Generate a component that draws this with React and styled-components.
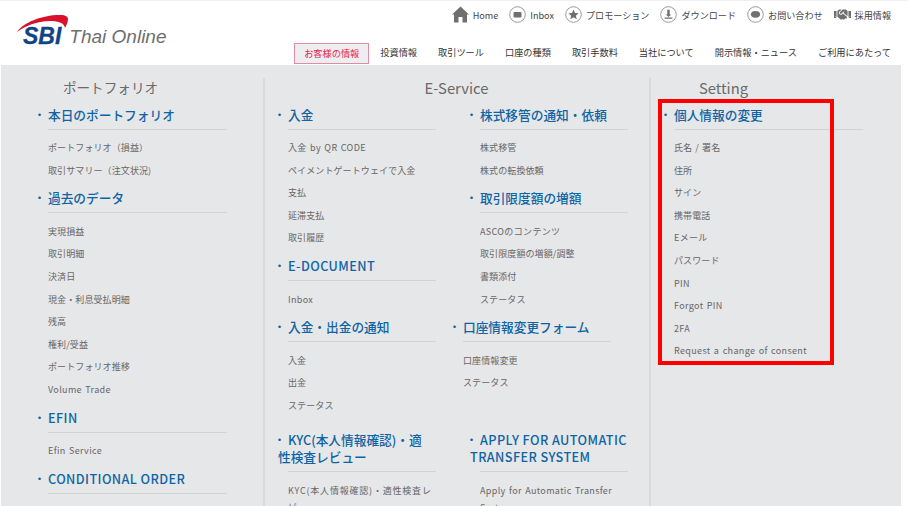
import React from "react";
import styled, { createGlobalStyle } from "styled-components";
import { FaHandshake } from "react-icons/fa";

const GlobalStyle = createGlobalStyle`
  html, body {
    margin: 0;
    padding: 0;
    background: #fff;
    overflow: hidden;
  }
  body {
    font-family: "Noto Sans CJK JP", "Noto Sans", sans-serif;
  }
`;

const Page = styled.div`
  position: relative;
  width: 908px;
  height: 506px;
  overflow: hidden;
`;

const Header = styled.header`
  height: 65px;
  box-sizing: border-box;
  border-top: 1px solid #eef0f4;
  display: flex;
  justify-content: space-between;
  padding: 0 17px 0 17px;
`;

const Logo = styled.div`
  display: flex;
  align-items: flex-end;
  height: 46px;
  position: relative;
  padding-left: 6px;
`;

const Swoosh = styled.svg`
  position: absolute;
  left: 0;
  top: 13px;
`;

const LogoMark = styled.span`
  font-family: "Liberation Sans", sans-serif;
  font-weight: 700;
  font-style: italic;
  font-size: 23px;
  line-height: 22px;
  color: #0f4486;
  -webkit-text-stroke: 0.3px #0f4486;
`;

const LogoName = styled.span`
  font-family: "Liberation Sans", sans-serif;
  font-style: italic;
  font-size: 19px;
  line-height: 21px;
  color: #6e6e6e;
  margin-left: 8px;
`;

const HeaderRight = styled.div`
  display: flex;
  flex-direction: column;
  align-items: flex-end;
`;

const TopLinks = styled.div`
  display: flex;
  align-items: center;
  gap: 11px;
  height: 42px;
  padding-bottom: 15px;
  box-sizing: border-box;
`;

const TopLink = styled.a`
  display: flex;
  align-items: center;
  gap: 4px;
  font-size: 9.1px;
  color: #444;
  white-space: nowrap;
`;

const Nav = styled.nav`
  display: flex;
  align-items: stretch;
  height: 21px;
`;

const NavItem = styled.a`
  display: flex;
  align-items: center;
  box-sizing: border-box;
  font-size: 9.2px;
  color: #333;
  white-space: nowrap;
  padding: ${(p) => (p.$active ? "0 9px 2px" : "0 0 4px 21px")};
  ${(p) =>
    p.$active &&
    `
    background: #eeeef0;
    border: 1px solid #e48ba3;
    color: #e8204f;
    margin-right: -10px;
  `}
`;

const Panel = styled.main`
  display: grid;
  grid-template-columns: 262px 386px 252px;
  height: 441px;
  width: 900px;
  margin-left: 1px;
  background: #e6e7e9;
  padding-top: 13px;
  box-sizing: border-box;
`;

const Column = styled.section`
  border-left: ${(p) => (p.$divider ? "2px solid #d9dadc" : "none")};
  padding-left: ${(p) => p.$pad}px;
  min-width: 0;
`;

const ColumnTitle = styled.h2`
  margin: 0 0 8.5px;
  font-size: ${(p) => p.$size || 14.8}px;
  line-height: 19px;
  font-weight: 400;
  color: #6a6a6a;
  text-align: center;
  padding-right: ${(p) => p.$shift || 0}px;
`;

const SubGrid = styled.div`
  display: grid;
  grid-template-columns: 148px 149px;
  column-gap: 44px;
  align-items: start;
`;

const Stack = styled.div`
  margin-left: ${(p) => p.$nudge || 0}px;
`;

const Group = styled.div`
  width: ${(p) => p.$width || 148}px;
  margin-bottom: ${(p) => p.$after ?? 7.1}px;
`;

const GroupTitle = styled.h3`
  position: relative;
  margin: 0;
  font-size: 12.7px;
  line-height: 17px;
  font-weight: 500;
  letter-spacing: ${(p) => (p.$latin ? "0.4px" : "0")};
  color: #0f64a3;
  padding-bottom: 6px;
  margin-left: ${(p) => (p.$hang ? "-10px" : "0")};
  margin-right: ${(p) => (p.$hang ? "-2px" : "0")};
  text-indent: ${(p) => (p.$hang ? "10px" : "0")};
  white-space: ${(p) => (p.$hang ? "pre-line" : "normal")};
  &::before {
    content: "・";
    position: absolute;
    left: ${(p) => (p.$hang ? "-4px" : "-14px")};
    top: 0;
    text-indent: 0;
    font-size: 11px;
    letter-spacing: 0;
  }
`;

const Rule = styled.div`
  height: 1px;
  background: #d2d3d5;
  margin-bottom: 7.5px;
`;

const Item = styled.a`
  display: block;
  font-size: 9px;
  line-height: 22.6px;
  color: #666;
  word-spacing: 1px;
  white-space: pre-line;
  letter-spacing: ${(p) => p.$track ?? (p.$latin ? 0.35 : 0.1)}px;
`;

const WrappedItem = styled(Item)`
  line-height: 17px;
  padding-top: 3px;
`;

const Highlight = styled.div`
  position: absolute;
  left: 658px;
  top: 99px;
  width: 176px;
  height: 266px;
  box-sizing: border-box;
  border: 4px solid #fe0000;
`;

const ICON = "#6f6f6f";

const hasLatin = (text) => /[A-Za-z]/.test(text);

const HomeIcon = () => (
  <svg width="17" height="17" viewBox="0 0 17 17">
    <path d="M8.5 0.5 L17 8.5 L15 8.5 L15 16.5 L10.5 16.5 L10.5 11 L6.5 11 L6.5 16.5 L2 16.5 L2 8.5 L0 8.5 Z" fill={ICON} />
  </svg>
);

const Ring = ({ children }) => (
  <svg width="17" height="17" viewBox="0 0 17 17">
    <circle cx="8.5" cy="8.5" r="7.8" fill="#fff" stroke="#9a9a9a" strokeWidth="1" />
    {children}
  </svg>
);

const InboxIcon = () => (
  <Ring>
    <rect x="4.5" y="6" width="8" height="5.5" rx="1" fill={ICON} />
  </Ring>
);

const StarIcon = () => (
  <Ring>
    <path d="M8.5 3.6 L10 7 L13.6 7.3 L10.9 9.7 L11.7 13.2 L8.5 11.3 L5.3 13.2 L6.1 9.7 L3.4 7.3 L7 7 Z" fill={ICON} />
  </Ring>
);

const DownloadIcon = () => (
  <Ring>
    <path d="M7.3 3.8 H9.7 V8.6 H11.2 L8.5 11 L5.8 8.6 H7.3 Z M4.6 11.6 H12.4 V12.8 H4.6 Z" fill={ICON} />
  </Ring>
);

const ChatIcon = () => (
  <Ring>
    <ellipse cx="8.5" cy="8.3" rx="4.6" ry="3.4" fill={ICON} />
  </Ring>
);

const columnOne = [
  { title: "本日のポートフォリオ", items: ["ポートフォリオ（損益）", "取引サマリー（注文状況)"] },
  {
    title: "過去のデータ",
    items: ["実現損益", "取引明細", "決済日", "現金・利息受払明細", "残高", "権利/受益", "ポートフォリオ推移", "Volume Trade"],
  },
  { title: "EFIN", items: ["Efin Service"] },
  { title: "CONDITIONAL ORDER", items: [] },
];

const topLinks = [
  { icon: <HomeIcon />, label: "Home" },
  { icon: <InboxIcon />, label: "Inbox" },
  { icon: <StarIcon />, label: "プロモーション" },
  { icon: <DownloadIcon />, label: "ダウンロード" },
  { icon: <ChatIcon />, label: "お問い合わせ" },
  { icon: <FaHandshake size={17} color={ICON} />, label: "採用情報" },
];

const navItems = ["投資情報", "取引ツール", "口座の種類", "取引手数料", "当社について", "開示情報・ニュース", "ご利用にあたって"];

const settingItems = ["氏名 / 署名", "住所", "サイン", "携帯電話", "Eメール", "パスワード", "PIN", "Forgot PIN", "2FA", "Request a change of consent"];

const MenuGroup = ({ title, items, width, after, hang, children }) => (
  <Group $width={width} $after={after}>
    <GroupTitle $hang={hang} $latin={/^[\x00-\x7f]+$/.test(title)}>
      {title}
    </GroupTitle>
    <Rule />
    {items &&
      items.map((item) => (
        <Item key={item} $latin={hasLatin(item)}>
          {item}
        </Item>
      ))}
    {children}
  </Group>
);

export default function App() {
  return (
    <Page>
      <GlobalStyle />
      <Header>
        <Logo>
          <Swoosh width="52" height="18" viewBox="0 0 52 18">
            <path d="M0 18 C6 9 24 1 43 1 C49 1 51 3 51 5 C51 8 49 12 48 14 C47 9 42 7 33 7 C20 7 8 12 0 18 Z" fill="#d8112c" />
          </Swoosh>
          <LogoMark>SBI</LogoMark>
          <LogoName>Thai Online</LogoName>
        </Logo>
        <HeaderRight>
          <TopLinks>
            {topLinks.map((link) => (
              <TopLink key={link.label}>
                {link.icon}
                {link.label}
              </TopLink>
            ))}
          </TopLinks>
          <Nav>
            <NavItem $active>お客様の情報</NavItem>
            {navItems.map((item) => (
              <NavItem key={item}>{item}</NavItem>
            ))}
          </Nav>
        </HeaderRight>
      </Header>
      <Panel>
        <Column $pad={47}>
          <ColumnTitle $shift={90} $size={13.6}>ポートフォリオ</ColumnTitle>
          {columnOne.map((group) => (
            <MenuGroup key={group.title} title={group.title} items={group.items} width={179} />
          ))}
        </Column>
        <Column $divider $pad={23}>
          <ColumnTitle $shift={24}>E-Service</ColumnTitle>
          <SubGrid>
            <Stack>
              <MenuGroup title="入金" items={["入金 by QR CODE", "ペイメントゲートウェイで入金", "支払", "延滞支払", "取引履歴"]} />
              <MenuGroup title="E-DOCUMENT" items={["Inbox"]} />
            </Stack>
            <Stack>
              <MenuGroup title="株式移管の通知・依頼" items={["株式移管", "株式の転換依頼"]} />
              <MenuGroup title="取引限度額の増額" items={["ASCOのコンテンツ", "取引限度額の増額/調整", "書類添付", "ステータス"]} />
            </Stack>
            <Stack>
              <MenuGroup title="入金・出金の通知" items={["入金", "出金", "ステータス"]} after={13.1} />
            </Stack>
            <Stack $nudge={-17}>
              <MenuGroup title="口座情報変更フォーム" items={["口座情報変更", "ステータス"]} />
            </Stack>
            <Stack>
              <MenuGroup title={"KYC(本人情報確認)・適\n性検査レビュー"} hang>
                <WrappedItem $track={0.8}>{"KYC(本人情報確認)・適性検査レ\nビュー"}</WrappedItem>
              </MenuGroup>
            </Stack>
            <Stack>
              <MenuGroup title={"APPLY FOR AUTOMATIC\nTRANSFER SYSTEM"} hang>
                <WrappedItem $latin>{"Apply for Automatic Transfer\nSystem"}</WrappedItem>
              </MenuGroup>
            </Stack>
          </SubGrid>
        </Column>
        <Column $divider $pad={23}>
          <ColumnTitle $shift={128}>Setting</ColumnTitle>
          <MenuGroup title="個人情報の変更" items={settingItems} width={189} />
        </Column>
      </Panel>
      <Highlight />
    </Page>
  );
}
